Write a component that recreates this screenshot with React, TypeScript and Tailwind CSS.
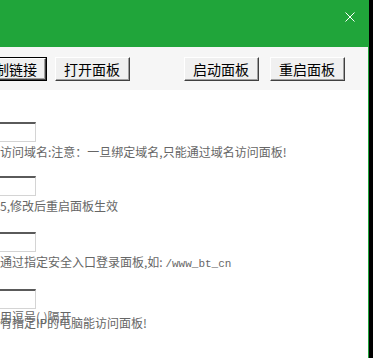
const CJK = "font-['SimSun','Noto_Sans_CJK_SC',sans-serif]";

function Btn({ label, primary, className }: { label: string; primary?: boolean; className?: string }) {
  return (
    <div
      className={`h-[24px] w-[75px] shrink-0 ${primary ? "border border-black" : ""} ${className ?? ""}`}
    >
      <div className="h-full w-full border-t border-l border-t-white border-l-white border-b border-r border-b-[#404040] border-r-[#404040]">
        <div className="flex h-full w-full items-center justify-center border-b border-r border-b-[#a0a0a0] border-r-[#a0a0a0] bg-[#f0f0f0] text-[14px] leading-none text-black">
          {label}
        </div>
      </div>
    </div>
  );
}

function Field({ className }: { className?: string }) {
  return (
    <div
      className={`-ml-[12px] h-[20px] w-[48px] border-t-2 border-r border-b border-t-[#5a5a5a] border-r-[#d4d4d4] border-b-[#d4d4d4] bg-white ${className ?? ""}`}
    />
  );
}

export default function App() {
  return (
    <div className={`flex h-[358px] w-[373px] overflow-hidden bg-black ${CJK}`}>
      <div className="flex h-full w-[369px] shrink-0 flex-col border-r border-[#20a53a] bg-white">
        <div className="flex h-[47px] shrink-0 justify-end bg-[#20a53a] pt-[12px] pr-[13px]">
          <svg width="10" height="10" viewBox="0 0 10 10">
            <path d="M0.5 0.5L9.5 9.5M9.5 0.5L0.5 9.5" stroke="white" strokeWidth="1" />
          </svg>
        </div>

        <div className="flex h-[43px] shrink-0 items-start bg-[#f6f6f6] pt-[10px]">
          <Btn label="复制链接" primary className="-ml-[28px]" />
          <Btn label="打开面板" className="ml-[8px]" />
          <Btn label="启动面板" className="ml-[54px]" />
          <Btn label="重启面板" className="ml-[11px]" />
        </div>

        <div className="flex-1 overflow-hidden text-[12px] leading-[14px] text-[#666]">
          <Field className="mt-[32px]" />
          <div className="mt-[3px] whitespace-nowrap">访问域名:注意：一旦绑定域名,只能通过域名访问面板!</div>

          <Field className="mt-[17px]" />
          <div className="mt-[3px] whitespace-nowrap">5,修改后重启面板生效</div>

          <Field className="mt-[19px]" />
          <div className="mt-[3px] whitespace-nowrap">
            通过指定安全入口登录面板,如: <span className="font-['Liberation_Mono',monospace] text-[11px]">/www_bt_cn</span>
          </div>

          <Field className="mt-[18px]" />
          <div className="mt-[1px] h-[6px] whitespace-nowrap">用逗号(,)隔开</div>
          <div className="whitespace-nowrap">有指定IP的电脑能访问面板!</div>

          <Field className="mt-[31px]" />
        </div>
      </div>
    </div>
  );
}
